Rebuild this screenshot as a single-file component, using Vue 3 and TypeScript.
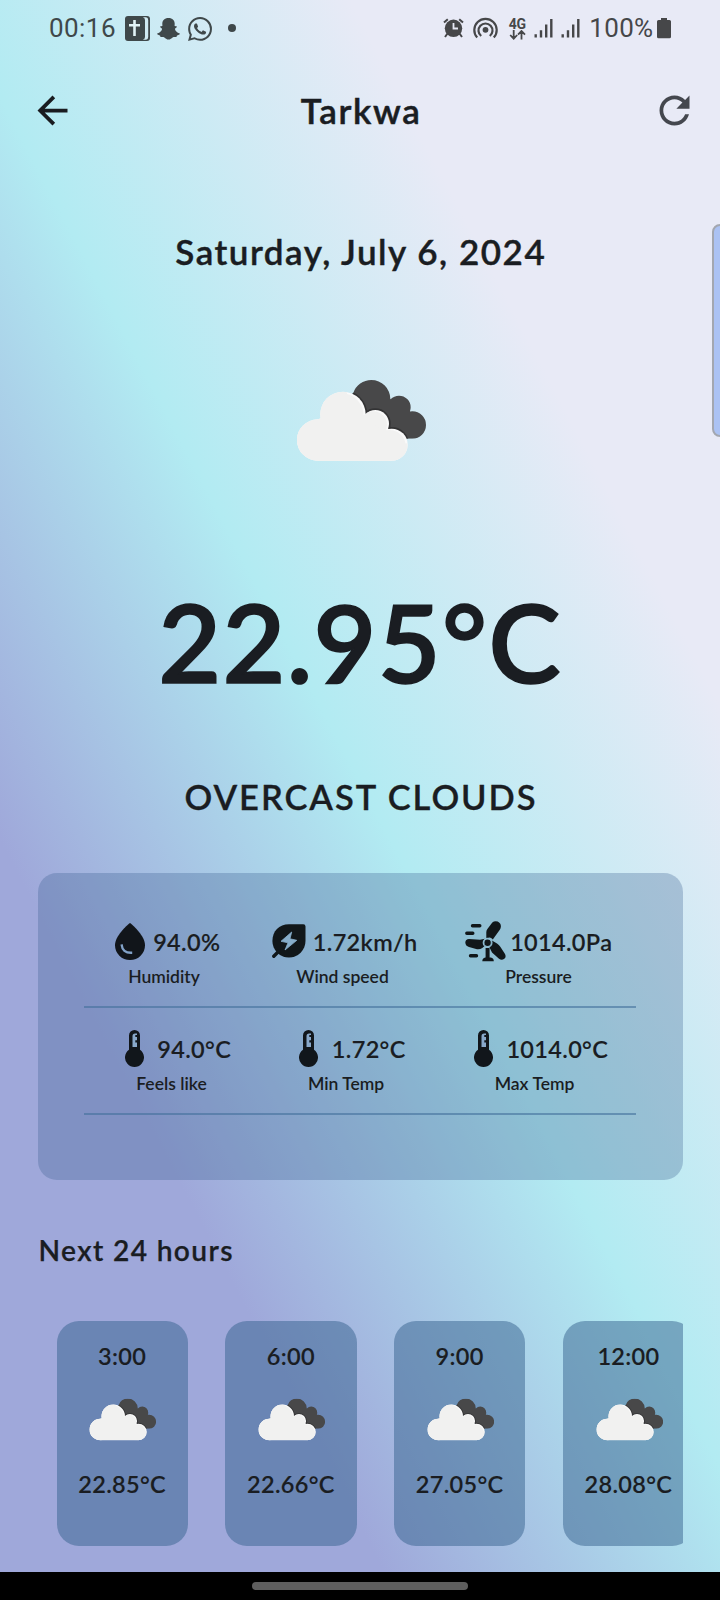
<script setup lang="ts">
type IconKind = 'drop' | 'leaf' | 'fan' | 'thermo'

interface Metric {
  icon: IconKind
  value: string
  label: string
}

interface HourForecast {
  time: string
  temp: string
}

const city = 'Tarkwa'
const today = 'Saturday, July 6, 2024'
const temperature = '22.95°C'
const condition = 'OVERCAST CLOUDS'

const metricRows: Metric[][] = [
  [
    { icon: 'drop', value: '94.0%', label: 'Humidity' },
    { icon: 'leaf', value: '1.72km/h', label: 'Wind speed' },
    { icon: 'fan', value: '1014.0Pa', label: 'Pressure' },
  ],
  [
    { icon: 'thermo', value: '94.0°C', label: 'Feels like' },
    { icon: 'thermo', value: '1.72°C', label: 'Min Temp' },
    { icon: 'thermo', value: '1014.0°C', label: 'Max Temp' },
  ],
]

const hours: HourForecast[] = [
  { time: '3:00', temp: '22.85°C' },
  { time: '6:00', temp: '22.66°C' },
  { time: '9:00', temp: '27.05°C' },
  { time: '12:00', temp: '28.08°C' },
]
</script>

<template>
  <div class="screen">
    <svg class="defs" width="0" height="0" aria-hidden="true">
      <defs>
        <g id="cloud-front">
          <circle cx="62" cy="180" r="62" />
          <circle cx="138" cy="103" r="68" />
          <circle cx="235" cy="131" r="41" />
          <circle cx="284" cy="194" r="48" />
          <path d="M62 118L138 100L205 102L235 131L275 147L284 194V242H62z" />
        </g>
        <clipPath id="back-clip">
          <circle cx="223" cy="57" r="57" />
          <circle cx="306" cy="82" r="35" />
          <circle cx="346" cy="135" r="41" />
          <path d="M223 20L279 56L306 82L340 95L346 176H230L166 40z" />
        </clipPath>
        <clipPath id="front-clip">
          <circle cx="62" cy="180" r="62" />
          <circle cx="138" cy="103" r="68" />
          <circle cx="235" cy="131" r="41" />
          <circle cx="284" cy="194" r="48" />
          <path d="M62 118L138 100L205 102L235 131L275 147L284 194V242H62z" />
        </clipPath>
        <symbol id="clouds" viewBox="-3 -3 393 248">
          <g clip-path="url(#back-clip)">
            <rect width="387" height="242" fill="#484849" />
            <use href="#cloud-front" fill="#333334" stroke="#333334" stroke-width="10" />
          </g>
          <use href="#cloud-front" fill="#fafafa" />
          <g clip-path="url(#front-clip)">
            <use href="#cloud-front" fill="#f1f1f0" x="-6" y="4" />
            <rect x="0" y="0" width="150" height="242" fill="#f1f1f0" />
            <rect x="60" y="190" width="280" height="52" fill="#f1f1f0" />
          </g>
        </symbol>
      </defs>
    </svg>

    <header class="status">
      <span class="clock">00:16</span>
      <svg class="bible" viewBox="0 0 25 25" width="25" height="25">
        <rect width="25" height="25" rx="3" fill="#3f484a" />
        <path d="M17.800 1.300h3.200q2.200.2 2.200 2.700v17q0 2.500-2.200 2.700h-3.200q2.200-.5 2.200-2.700V4q0-2.200-2.200-2.700z" fill="#d0eaf2" />
        <path d="M8.200 4h2.600v4h4.200v2.600h-4.200V20H8.200v-9.400H4V8h4.200z" fill="#e2f3f6" />
      </svg>
      <svg class="ghost" viewBox="0 0 23 22" width="23" height="22">
        <path
          d="M11.500 0C7.500 0 5.300 2.600 5.300 5.800l.1 2.300c-1 .300-1.900-.2-2.300.6-.2.900 1.500 1.300 1.900 2 .3 1.300-1.900 4.100-4.700 4.800-.8.300.2 1.500 2.600 1.900.5.200.1 1.500.9 1.600 1 .1 2.100-.4 3.600.4 1.100.8 2.300 2.100 4.100 2.100s3-1.300 4.100-2.100c1.500-.8 2.600-.3 3.600-.4.8-.1.400-1.400.9-1.600 2.400-.4 3.400-1.600 2.600-1.900-2.800-.7-5-3.500-4.700-4.800.4-.7 2.100-1.100 1.900-2-.4-.8-1.300-.3-2.300-.6l.1-2.300C17.700 2.600 15.500 0 11.500 0z"
          fill="#3f484a"
        />
      </svg>
      <svg class="whatsapp" viewBox="0 0 24 24" width="24" height="24">
        <path
          fill="#3f484a"
          d="M17.472 14.382c-.297-.149-1.758-.867-2.030-.967-.273-.099-.471-.148-.670.150-.197.297-.767.966-.940 1.164-.173.199-.347.223-.644.075-.297-.150-1.255-.463-2.390-1.475-.883-.788-1.480-1.761-1.653-2.059-.173-.297-.018-.458.130-.606.134-.133.298-.347.446-.520.149-.174.198-.298.298-.497.099-.198.050-.371-.025-.520-.075-.149-.669-1.612-.916-2.207-.242-.579-.487-.500-.669-.510-.173-.008-.371-.010-.570-.010-.198 0-.520.074-.792.372-.272.297-1.040 1.016-1.040 2.479 0 1.462 1.065 2.875 1.213 3.074.149.198 2.096 3.200 5.077 4.487.709.306 1.262.489 1.694.625.712.227 1.360.195 1.871.118.571-.085 1.758-.719 2.006-1.413.248-.694.248-1.289.173-1.413-.074-.124-.272-.198-.570-.347m-5.421 7.403h-.004a9.870 9.870 0 01-5.031-1.378l-.361-.214-3.741.982.998-3.648-.235-.374a9.860 9.860 0 01-1.510-5.260c.001-5.450 4.436-9.884 9.888-9.884 2.640 0 5.122 1.030 6.988 2.898a9.825 9.825 0 012.893 6.994c-.003 5.450-4.437 9.884-9.885 9.884m8.413-18.297A11.815 11.815 0 0012.050 0C5.495 0 .160 5.335.157 11.892c0 2.096.547 4.142 1.588 5.945L.057 24l6.305-1.654a11.882 11.882 0 005.683 1.448h.005c6.554 0 11.890-5.335 11.893-11.893a11.821 11.821 0 00-3.480-8.413z"
        />
      </svg>
      <i class="dot"></i>

      <div class="status-right">
        <svg class="alarm" viewBox="0 0 22 20" width="22" height="20">
          <circle cx="10.500" cy="10.300" r="8.700" fill="#464749" />
          <path d="M1 4.600L4.800 1.200M20 4.600L16.200 1.200M4.500 15.500L2 19M16.500 15.500L19 19" stroke="#464749" stroke-width="2" />
          <path d="M10.500 5v5.500h4.500" fill="none" stroke="#e7e9f5" stroke-width="1.800" />
        </svg>
        <svg class="hotspot" viewBox="0 0 25 22" width="25" height="22" fill="none" stroke="#464749" stroke-width="2.200">
          <circle cx="12.500" cy="12.800" r="2.900" fill="#464749" stroke="none" />
          <path d="M8.200 19a7 7 0 1 1 8.600 0" />
          <path d="M4.200 20.600a11.200 11.200 0 1 1 16.600 0" />
        </svg>
        <div class="lte">
          <span>4G</span>
          <svg viewBox="0 0 17 10" width="17" height="10" fill="none" stroke="#464749" stroke-width="1.800">
            <path d="M4.700 0v8.500M1.200 5l3.500 3.700L8.200 5M12.500 9.500V1M9 4.600L12.500 1 16 4.600" />
          </svg>
        </div>
        <svg v-for="n in 2" :key="n" class="signal" viewBox="0 0 19 20" width="19" height="20">
          <path
            d="M1.700 16.200v3.300M7 12.200v7.300M12.200 6.500v13M17.300 1v18.500"
            fill="none"
            stroke="#464749"
            stroke-width="2.400"
          />
        </svg>
        <span class="percent">100%</span>
        <svg class="battery" viewBox="0 0 14 21" width="14" height="21">
          <path d="M4 0h6v2h2.500Q14 2 14 3.500v15.300q0 1.500-1.500 1.500h-11Q0 20.300 0 18.800V3.500Q0 2 1.500 2H4z" fill="#464749" />
        </svg>
      </div>
    </header>

    <nav class="appbar">
      <svg viewBox="0 0 24 24" width="45" height="45">
        <path d="M20 11H7.830l5.590-5.590L12 4l-8 8 8 8 1.410-1.410L7.830 13H20v-2z" fill="#1a1c20" />
      </svg>
      <h1>{{ city }}</h1>
      <svg viewBox="0 0 24 24" width="45" height="45">
        <path
          d="M17.650 6.350C16.200 4.900 14.210 4 12 4c-4.420 0-7.990 3.580-7.990 8s3.570 8 7.990 8c3.730 0 6.840-2.550 7.730-6h-2.080c-.820 2.330-3.040 4-5.650 4-3.310 0-6-2.690-6-6s2.690-6 6-6c1.660 0 3.140.690 4.220 1.780L13 11h7V4l-2.350 2.350z"
          fill="#44474e"
        />
      </svg>
    </nav>

    <main>
      <p class="date">{{ today }}</p>
      <svg class="hero-cloud" width="131" height="82.700"><use href="#clouds" /></svg>
      <p class="temperature">{{ temperature }}</p>
      <p class="condition">{{ condition }}</p>

      <section class="details">
        <div v-for="(row, r) in metricRows" :key="r" class="metric-row">
          <div v-for="m in row" :key="m.label" class="metric">
            <div class="reading">
              <span class="icon">
                <svg v-if="m.icon === 'drop'" viewBox="0 0 30 37" width="30" height="37">
                  <path d="M15 0C11.500 2.500 0 13.200 0 22.200a15 14.800 0 0 0 30 0C30 13.200 18.500 2.500 15 0z" fill="#11151a" />
                  <path d="M6.800 22.500c.3 4.300 3.700 7.200 9.200 7.200" fill="none" stroke="#82a2c8" stroke-width="2.400" stroke-linecap="square" />
                </svg>
                <svg v-else-if="m.icon === 'leaf'" class="leaf" viewBox="0 0 34 34" width="34" height="34">
                  <path d="M17 .2h14.300q2.200 0 2.200 2.200V17A16.500 16.500 0 0 1 .4 17C.4 7 7 .2 17 .2z" fill="#11171a" />
                  <path d="M1.800 32.200L7 27" stroke="#11171a" stroke-width="3.400" stroke-linecap="round" />
                  <path d="M19.700 8L9 17.300L16 18.800L13 26L24.800 16.300L18 14.800z" fill="#87aecb" stroke="#87aecb" stroke-width=".8" stroke-linejoin="round" />
                </svg>
                <svg v-else-if="m.icon === 'fan'" class="fan" viewBox="0 0 41 41" width="41" height="41">
                  <g fill="#11171a">
                    <path d="M21.300 18.500V11.300Q21.300 9.500 22.400 8L27.300 1.500Q29.500-.4 32.700.6Q36 2.200 35.900 5.500Q35.800 7.300 34.800 8.800L27.800 18.500Q24.500 14.500 21.300 18.500z" />
                    <path d="M20 17.800L15 18.700L4 18Q.5 18.300.3 21.500Q.5 25 4 26L12 28.200Q15 28.600 17.300 27L20 24.800Q17.500 21.500 20 17.800z" />
                    <path d="M26.500 19.300L32 22.500Q34 23.700 35.300 25.800L40 33Q41.500 36 39.300 37.800Q36.700 39.600 34 37.800L27 31.500L24.300 26Q27.500 24 26.500 19.300z" />
                    <circle cx="22.600" cy="21.700" r="3.200" />
                    <path d="M20.600 27h4v9.500h1.200q3 .4 3 3.800H17.300q0-3.400 3-3.800h.3z" />
                  </g>
                  <path d="M7.500 4.700h7.300M1.800 12.300h6M5.500 34.800h6" stroke="#11171a" stroke-width="3.400" stroke-linecap="round" />
                  <circle cx="22.600" cy="21.700" r="4.300" fill="none" stroke="#8dbbd1" stroke-width="1.300" />
                </svg>
                <svg v-else viewBox="0 0 19 37" width="19" height="37">
                  <path d="M4 5.500a5.500 5.500 0 0 1 11 0v14.200a9.500 9.500 0 1 1-11 0z" fill="#11161b" />
                  <path d="M7.500 17V6.200q0-2.700 2.600-2.700H12v1.500h-1.700v2H12v3.200h-1.700v2.300H12V17z" fill="#88a8ca" />
                </svg>
              </span>
              <span class="value">{{ m.value }}</span>
            </div>
            <span class="label">{{ m.label }}</span>
          </div>
        </div>
      </section>

      <h2>Next 24 hours</h2>
      <section class="hours">
        <article v-for="h in hours" :key="h.time" class="hour">
          <span>{{ h.time }}</span>
          <svg width="67.700" height="42.700"><use href="#clouds" /></svg>
          <span>{{ h.temp }}</span>
        </article>
      </section>
    </main>

    <i class="edge-panel"></i>
    <footer class="gesture"><i></i></footer>
  </div>
</template>

<style>
body {
  margin: 0;
  background: #000;
}
</style>

<style scoped>
.screen {
  position: relative;
  box-sizing: border-box;
  width: 720px;
  height: 1600px;
  overflow: hidden;
  display: flex;
  flex-direction: column;
  color: #1a1d22;
  font-family: Lato, 'Liberation Sans', sans-serif;
  background: linear-gradient(62.300deg, #9fa8da 353px, #b2ebf2 699px, #e8eaf6 1054px);
}
.defs {
  position: absolute;
}
svg {
  display: block;
  flex: none;
}
p,
h1,
h2 {
  margin: 0;
}

.status {
  height: 56px;
  flex: none;
  display: flex;
  align-items: center;
  padding: 0 49px 0 49px;
  font-family: Roboto, sans-serif;
  font-size: 26px;
  line-height: 32px;
  color: #3f484a;
}
.clock {
  width: 76px;
  letter-spacing: 0.450px;
}
.ghost {
  margin: 2px 0 0 7px;
}
.whatsapp {
  margin: 1px 0 0 7.500px;
}
.dot {
  width: 8px;
  height: 8px;
  margin-left: 16.500px;
  border-radius: 50%;
  background: #3f484a;
}
.status-right {
  margin-left: auto;
  display: flex;
  align-items: center;
  color: #464749;
}
.hotspot {
  margin-left: 8px;
}
.lte {
  width: 17px;
  margin: 1px 0 0 10.500px;
}
.lte span {
  display: block;
  font-size: 14px;
  line-height: 12px;
  font-weight: 700;
  letter-spacing: -0.300px;
}
.signal {
  margin-left: 8.500px;
}
.signal + .signal {
  margin-left: 7.500px;
}
.percent {
  margin: 0 3.500px 0 9.500px;
  letter-spacing: 0.350px;
}

.appbar {
  height: 108px;
  flex: none;
  display: flex;
  align-items: center;
  justify-content: space-between;
  padding: 0 22.800px 0 30px;
}
.appbar h1 {
  font-size: 35px;
  line-height: 44px;
  font-weight: 600;
  letter-spacing: 1.650px;
  margin-left: -5px;
  -webkit-text-stroke: 0.500px currentColor;
}

main {
  flex: 1;
  min-height: 0;
  display: flex;
  flex-direction: column;
  align-items: center;
  padding: 0 37.500px;
}
.date {
  margin: 65px 0 0 1.500px;
  font-size: 35px;
  line-height: 44px;
  font-weight: 600;
  letter-spacing: 1.520px;
  -webkit-text-stroke: 0.400px currentColor;
}
.hero-cloud {
  margin: 106px 0 0 2px;
}
.temperature {
  margin-top: 109.500px;
  font-size: 108.500px;
  line-height: 140px;
  font-weight: 600;
  letter-spacing: 1.300px;
  -webkit-text-stroke: 1.600px currentColor;
}
.condition {
  margin: 64px 0 0 2px;
  font-size: 34.500px;
  line-height: 44px;
  font-weight: 600;
  letter-spacing: 1.950px;
  -webkit-text-stroke: 0.300px currentColor;
}

.details {
  box-sizing: border-box;
  width: 645px;
  height: 307.500px;
  flex: none;
  margin-top: 53.500px;
  padding: 28.500px 46.700px 0;
  border-radius: 19px;
  background: rgba(56, 93, 141, 0.3);
}
.metric-row {
  box-sizing: border-box;
  height: 107px;
  display: flex;
  justify-content: space-around;
  padding-top: 18px;
  border-bottom: 2px solid rgba(66, 112, 155, 0.6);
}
.metric {
  display: flex;
  flex-direction: column;
  align-items: center;
}
.reading {
  height: 44px;
  display: flex;
  align-items: center;
}
.icon {
  width: 37.500px;
  margin: 0 4.200px 0 3.750px;
  display: flex;
  justify-content: center;
}
.leaf {
  margin-left: -2px;
}
.fan {
  margin: 0 -0.250px 0 -3.250px;
}
.value {
  padding-top: 2px;
  font-size: 23.500px;
  line-height: 30px;
  font-weight: 600;
  letter-spacing: 0.330px;
  -webkit-text-stroke: 0.100px currentColor;
}
.label {
  margin-top: 1.500px;
  font-size: 17.500px;
  line-height: 24px;
  font-weight: 600;
}

h2 {
  align-self: flex-start;
  margin: 52px 0 0 1px;
  font-size: 28.200px;
  line-height: 36px;
  font-weight: 600;
  letter-spacing: 1.350px;
  -webkit-text-stroke: 0.250px currentColor;
}
.hours {
  align-self: stretch;
  display: flex;
  gap: 37.500px;
  padding-left: 19px;
  margin-top: 52.500px;
  overflow: hidden;
}
.hour {
  box-sizing: border-box;
  flex: none;
  width: 131.250px;
  height: 225px;
  padding-top: 20.500px;
  display: flex;
  flex-direction: column;
  align-items: center;
  border-radius: 22px;
  background: rgba(54, 97, 142, 0.5);
  font-size: 23.500px;
  line-height: 30px;
  font-weight: 600;
  letter-spacing: 0.300px;
  -webkit-text-stroke: 0.100px currentColor;
}
.hour svg {
  margin: 27px 0 28.300px 2px;
}

.edge-panel {
  position: absolute;
  box-sizing: border-box;
  left: 711.500px;
  top: 224px;
  width: 20px;
  height: 213px;
  border: 2px solid #a3a7b0;
  border-radius: 8px;
  background: #abc2f3;
}
.gesture {
  flex: none;
  height: 28px;
  box-sizing: border-box;
  padding-top: 10px;
  background: #000;
}
.gesture i {
  display: block;
  width: 216px;
  height: 8px;
  margin: 0 auto;
  border-radius: 4px;
  background: #5e5e5e;
}
</style>
